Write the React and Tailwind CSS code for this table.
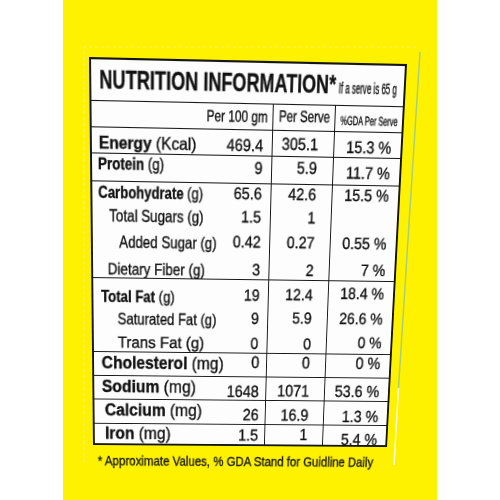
import React from "react";

const rows = [
  { h: "h-[24.9px] border-b", fs: "text-[16.5px]", label: <><span className="font-bold">Energy</span> (Kcal)</>, lc: "pl-[7px] pt-[4.5px]", ls: "[transform:scaleX(0.95)]", v1: "469.4", c1: "pr-[9px] pt-[4.4px]", v2: "305.1", c2: "pt-[2.6px]", v3: "15.3 %", c3: "pt-[5.3px]", vs: "[transform:scaleX(0.9)]" },
  { h: "h-[27.1px] border-b", fs: "text-[16.5px]", label: <><span className="font-bold">Protein</span> (g)</>, lc: "pl-[6px] pt-0", ls: "[transform:scaleX(0.82)]", v1: "9", c1: "pr-[9px] pt-[2.1px]", v2: "5.9", c2: "pt-[1.1px]", v3: "11.7 %", c3: "pt-[4.8px]", vs: "[transform:scaleX(0.9)]" },
  { h: "h-[23px]", fs: "text-[16.5px]", label: <><span className="font-bold">Carbohydrate</span> (g)</>, lc: "pl-[6px] pt-[1px]", ls: "[transform:scaleX(0.81)]", v1: "65.6", c1: "pr-[9px] pt-0", v2: "42.6", c2: "pt-0", v3: "15.5 %", c3: "pt-0", vs: "[transform:scaleX(0.9)]" },
  { h: "h-[24.4px]", fs: "text-[16.5px]", label: "Total Sugars (g)", lc: "pl-[16.7px] pt-[0.6px]", ls: "[transform:scaleX(0.83)]", v1: "1.5", c1: "pr-[9px] pt-0", v2: "1", c2: "pt-0", v3: "", c3: "pt-0", vs: "[transform:scaleX(0.9)]" },
  { h: "h-[27.9px]", fs: "text-[16.5px]", label: "Added Sugar (g)", lc: "pl-[26.8px] pt-[2px]", ls: "[transform:scaleX(0.83)]", v1: "0.42", c1: "pr-[9px] pt-[0.3px]", v2: "0.27", c2: "pt-0", v3: "0.55 %", c3: "pt-0", vs: "[transform:scaleX(0.9)]" },
  { h: "h-[21px] border-b", fs: "text-[16.5px]", label: "Dietary Fiber (g)", lc: "pl-[15.4px] pt-[1.2px]", ls: "[transform:scaleX(0.845)]", v1: "3", c1: "pr-[9px] pt-[1px]", v2: "2", c2: "pt-[0.2px]", v3: "7 %", c3: "pt-0", vs: "[transform:scaleX(0.9)]" },
  { h: "h-[24px]", fs: "text-[16.5px]", label: <><span className="font-bold">Total Fat</span> (g)</>, lc: "pl-[7.9px] pt-[8.7px]", ls: "[transform:scaleX(0.83)]", v1: "19", c1: "pr-[9px] pt-[5.5px]", v2: "12.4", c2: "pt-[4.8px]", v3: "18.4 %", c3: "pt-[2.2px]", vs: "[transform:scaleX(0.9)]" },
  { h: "h-[25.5px]", fs: "text-[16.5px]", label: "Saturated Fat (g)", lc: "pl-[25.4px] pt-[7.2px]", ls: "[transform:scaleX(0.83)]", v1: "9", c1: "pr-[9px] pt-[5.6px]", v2: "5.9", c2: "pt-[4.9px]", v3: "26.6 %", c3: "pt-[4.1px]", vs: "[transform:scaleX(0.9)]" },
  { h: "h-[26.5px] border-b", fs: "text-[16.5px]", label: "Trans Fat (g)", lc: "pl-[25.3px] pt-[5.6px]", ls: "[transform:scaleX(0.96)]", v1: "0", c1: "pr-[9px] pt-[6.2px]", v2: "0", c2: "pt-[5.6px]", v3: "0 %", c3: "pt-[3.8px]", vs: "[transform:scaleX(0.9)]" },
  { h: "h-[24.1px] border-b", fs: "text-[17.5px]", label: <><span className="font-bold">Cholesterol</span> (mg)</>, lc: "pl-[8.3px] pt-[1.7px]", ls: "[transform:scaleX(0.94)]", v1: "0", c1: "pr-[7px] pt-0", v2: "0", c2: "pt-0", v3: "0 %", c3: "pt-0", vs: "[transform:scaleX(0.88)]" },
  { h: "h-[25.5px] border-b", fs: "text-[17.5px]", label: <><span className="font-bold">Sodium</span> (mg)</>, lc: "pl-[8.1px] pt-[2.6px]", ls: "[transform:scaleX(0.95)]", v1: "1648", c1: "pr-[7px] pt-[6.4px]", v2: "1071", c2: "pt-[5.9px]", v3: "53.6 %", c3: "pt-[5.2px]", vs: "[transform:scaleX(0.88)]" },
  { h: "h-[25.6px] border-b", fs: "text-[17.5px]", label: <><span className="font-bold">Calcium</span> (mg)</>, lc: "pl-[11.2px] pt-[1.9px]", ls: "[transform:scaleX(0.95)]", v1: "26", c1: "pr-[7px] pt-[6px]", v2: "16.9", c2: "pt-[5.5px]", v3: "1.3 %", c3: "pt-[6.7px]", vs: "[transform:scaleX(0.88)]" },
  { h: "h-[21.3px]", fs: "text-[17.5px]", label: <><span className="font-bold">Iron</span> (mg)</>, lc: "pl-[10.9px] pt-[1.1px]", ls: "[transform:scaleX(0.95)]", v1: "1.5", c1: "pr-[7px] pt-[2.1px]", v2: "1", c2: "pt-[1.6px]", v3: "5.4 %", c3: "pt-[6.6px]", vs: "[transform:scaleX(0.88)]" },
];

function Row({ r }) {
  return (
    <div className={`flex shrink-0 border-[#151515] leading-[18px] ${r.h} ${r.fs}`}>
      <div className="flex w-[182px] shrink-0">
        <div className={`min-w-0 flex-1 ${r.lc}`}>
          <span className={`inline-block origin-left whitespace-nowrap ${r.ls}`}>{r.label}</span>
        </div>
        <div className={`flex shrink-0 justify-end ${r.c1}`}>
          <span className={`inline-block origin-right whitespace-nowrap ${r.vs}`}>{r.v1}</span>
        </div>
      </div>
      <div className={`flex w-[63px] min-w-0 shrink-0 justify-end border-l-[1.5px] border-[#151515] pr-[16px] ${r.c2}`}>
        <span className={`inline-block origin-right whitespace-nowrap ${r.vs}`}>{r.v2}</span>
      </div>
      <div className={`flex min-w-0 flex-1 justify-end border-l-[1.5px] border-[#151515] pr-[9.5px] ${r.c3}`}>
        <span className={`inline-block origin-right whitespace-nowrap ${r.vs}`}>{r.v3}</span>
      </div>
    </div>
  );
}

export default function App() {
  return (
    <div className="relative flex h-[500px] w-[500px] overflow-hidden bg-white font-['Liberation_Sans',Arial,sans-serif] text-[#111]">
      <div className="ml-[63px] h-full w-[374px] bg-[#fff200] pl-[26px] pt-[57px]">
        <div className="w-[318px] origin-top-left [-webkit-text-stroke:0.35px_#111] [transform:matrix3d(1.012624,0.02229,0,0.0000397,0.011131,1.079708,0,0.00021206,0,0,1,0,0,0,0,1)]">
          <div className="flex h-[389px] flex-col border-2 border-[#151515] bg-[#fdfdfd]">
            <div className="flex h-[38.7px] shrink-0 items-baseline border-b-[1.5px] border-[#151515] pl-[7.8px] pt-[6.6px]">
              <span className="w-[240.5px] shrink-0 text-[24px] font-bold leading-[24px]">
                <span className="inline-block origin-left whitespace-nowrap [transform:scaleX(0.755)]">NUTRITION INFORMATION*</span>
              </span>
              <span className="text-[14px] leading-[14px]">
                <span className="inline-block origin-left whitespace-nowrap [transform:scaleX(0.575)]">If a serve is 65 g</span>
              </span>
            </div>
            <div className="flex h-[25.5px] shrink-0 border-b-[1.5px] border-[#151515] leading-[18px]">
              <div className="flex w-[182px] shrink-0 justify-end pr-[4.5px] pt-[3.3px] text-[15.5px]">
                <span className="inline-block origin-right whitespace-nowrap [transform:scaleX(0.77)]">Per 100 gm</span>
              </div>
              <div className="flex w-[63px] min-w-0 shrink-0 justify-center border-l-[1.5px] border-[#151515] pt-[2.2px] text-[15.5px]">
                <span className="inline-block origin-center whitespace-nowrap [transform:scaleX(0.75)]">Per Serve</span>
              </div>
              <div className="flex min-w-0 flex-1 justify-center border-l-[1.5px] border-[#151515] pt-[5.3px] text-[12px]">
                <span className="inline-block origin-center whitespace-nowrap [transform:scaleX(0.63)]">%GDA Per Serve</span>
              </div>
            </div>
            {rows.map((r, i) => (
              <Row key={i} r={r} />
            ))}
          </div>
          <div className="pl-[5px] pt-[9px] text-[14px] leading-[16px] text-[#222]">
            <span className="inline-block origin-left whitespace-nowrap [transform:scaleX(0.885)]">* Approximate Values, % GDA Stand for Guidline Daily</span>
          </div>
        </div>
      </div>
      <svg className="pointer-events-none absolute inset-0" width="500" height="500" viewBox="0 0 500 500">
        <polyline points="84,462 84,47 417,47" fill="none" stroke="#f7ef8a" strokeWidth="1" strokeDasharray="3 3" />
        <line x1="420" y1="52" x2="398.5" y2="388" stroke="#a9cf7a" strokeWidth="1.5" />
        <line x1="398.5" y1="388" x2="394" y2="465" stroke="#fffbe0" strokeWidth="1.5" />
      </svg>
    </div>
  );
}
